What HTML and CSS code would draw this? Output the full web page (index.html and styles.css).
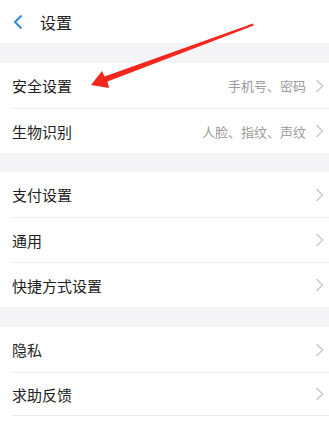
FILE: index.html
```html
<!DOCTYPE html>
<html lang="zh">
<head>
<meta charset="utf-8">
<title>设置</title>
<link rel="stylesheet" href="styles.css">
</head>
<body>
<div class="page">
  <header class="topbar">
    <svg class="back" width="12" height="16" viewBox="0 0 12 16"><path d="M9.5 1.5 L3 8 L9.5 14.5" fill="none" stroke="#2b8be0" stroke-width="2"/></svg>
    <span class="title">设置</span>
  </header>
  <div class="gap"></div>
  <ul class="group">
    <li class="row"><span class="label">安全设置</span><span class="value">手机号、密码</span><svg class="chev" width="9" height="14" viewBox="0 0 9 14"><path d="M1.5 1 L7.5 7 L1.5 13" fill="none" stroke="#c6c6c6" stroke-width="1.3"/></svg></li>
    <li class="row"><span class="label">生物识别</span><span class="value">人脸、指纹、声纹</span><svg class="chev" width="9" height="14" viewBox="0 0 9 14"><path d="M1.5 1 L7.5 7 L1.5 13" fill="none" stroke="#c6c6c6" stroke-width="1.3"/></svg></li>
  </ul>
  <div class="gap g2"></div>
  <ul class="group">
    <li class="row"><span class="label">支付设置</span><svg class="chev" width="9" height="14" viewBox="0 0 9 14"><path d="M1.5 1 L7.5 7 L1.5 13" fill="none" stroke="#c6c6c6" stroke-width="1.3"/></svg></li>
    <li class="row"><span class="label">通用</span><svg class="chev" width="9" height="14" viewBox="0 0 9 14"><path d="M1.5 1 L7.5 7 L1.5 13" fill="none" stroke="#c6c6c6" stroke-width="1.3"/></svg></li>
    <li class="row"><span class="label">快捷方式设置</span><svg class="chev" width="9" height="14" viewBox="0 0 9 14"><path d="M1.5 1 L7.5 7 L1.5 13" fill="none" stroke="#c6c6c6" stroke-width="1.3"/></svg></li>
  </ul>
  <div class="gap"></div>
  <ul class="group">
    <li class="row"><span class="label">隐私</span><svg class="chev" width="9" height="14" viewBox="0 0 9 14"><path d="M1.5 1 L7.5 7 L1.5 13" fill="none" stroke="#c6c6c6" stroke-width="1.3"/></svg></li>
    <li class="row last-sep"><span class="label">求助反馈</span><svg class="chev" width="9" height="14" viewBox="0 0 9 14"><path d="M1.5 1 L7.5 7 L1.5 13" fill="none" stroke="#c6c6c6" stroke-width="1.3"/></svg></li>
  </ul>
  <svg class="arrow" width="329" height="120" viewBox="0 0 329 120">
    <polygon points="91,85 102,71 104.5,76.5 253,23.5 253.8,25.6 107.5,81.5 109,88" fill="#f3271d"/>
  </svg>
</div>
</body>
</html>
```
FILE: styles.css
```css
* { box-sizing: border-box; }
html, body { margin: 0; padding: 0; }
body {
  background: #ffffff;
  font-family: "Noto Sans CJK SC", "Noto Sans", sans-serif;
  color: #1a1a1a;
}
.page { position: relative; width: 329px; height: 427px; overflow: hidden; }
.topbar {
  height: 43px;
  display: flex;
  align-items: center;
  background: #fff;
}
.back { margin-left: 12px; margin-top: 1px; }
.title { margin-left: 16px; font-size: 16px; color: #222; }
.gap { height: 20px; background: #f4f4f6; }
.gap.g2 { height: 19px; }
.group { list-style: none; margin: 0; padding: 0; background: #fff; }
.row {
  height: 45px;
  display: flex;
  align-items: center;
  margin-left: 12px;
  padding-right: 5px;
  border-top: 1px solid #ececec;
}
.row:first-child { border-top: none; }
.last-sep { border-bottom: 1px solid #ececec; height: 44px; }
.label { font-size: 15px; color: #1e1e1e; flex: 1; }
.value { font-size: 13px; color: #9a9a9a; margin-right: 9px; }
.chev { display: block; }
.arrow { position: absolute; left: 0; top: 0; pointer-events: none; }
```
